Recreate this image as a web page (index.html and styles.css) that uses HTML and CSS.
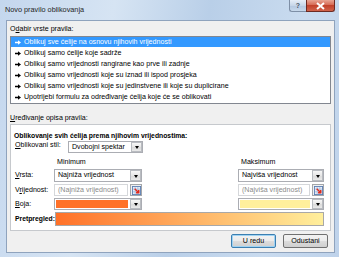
FILE: index.html
```html
<!DOCTYPE html>
<html>
<head>
<meta charset="utf-8">
<link rel="stylesheet" href="styles.css">
</head>
<body>
<div class="window">
  <div class="titlebar">
    <div class="title">Novo pravilo oblikovanja</div>
    <div class="caption">
      <div class="cap-help">?</div>
      <div class="cap-close"><svg width="11" height="8" viewBox="0 0 11 8"><path d="M2 1 L9 7 M9 1 L2 7" stroke="#fff" stroke-width="2"/></svg></div>
    </div>
  </div>
  <div class="client">
    <div class="label"><span>O<u>d</u>abir vrste pravila:</span></div>
    <div class="listbox">
      <div class="item selected"><svg class="arr" width="6" height="5" viewBox="0 0 6 5"><path d="M0 1.8 H3 V0.3 L6 2.5 L3 4.7 V3.2 H0 Z" fill="currentColor"/></svg>Oblikuj sve ćelije na osnovu njihovih vrijednosti</div>
      <div class="item"><svg class="arr" width="6" height="5" viewBox="0 0 6 5"><path d="M0 1.8 H3 V0.3 L6 2.5 L3 4.7 V3.2 H0 Z" fill="currentColor"/></svg>Oblikuj samo ćelije koje sadrže</div>
      <div class="item"><svg class="arr" width="6" height="5" viewBox="0 0 6 5"><path d="M0 1.8 H3 V0.3 L6 2.5 L3 4.7 V3.2 H0 Z" fill="currentColor"/></svg>Oblikuj samo vrijednosti rangirane kao prve ili zadnje</div>
      <div class="item"><svg class="arr" width="6" height="5" viewBox="0 0 6 5"><path d="M0 1.8 H3 V0.3 L6 2.5 L3 4.7 V3.2 H0 Z" fill="currentColor"/></svg>Oblikuj samo vrijednosti koje su iznad ili ispod prosjeka</div>
      <div class="item"><svg class="arr" width="6" height="5" viewBox="0 0 6 5"><path d="M0 1.8 H3 V0.3 L6 2.5 L3 4.7 V3.2 H0 Z" fill="currentColor"/></svg>Oblikuj samo vrijednosti koje su jedinstvene ili koje su duplicirane</div>
      <div class="item"><svg class="arr" width="6" height="5" viewBox="0 0 6 5"><path d="M0 1.8 H3 V0.3 L6 2.5 L3 4.7 V3.2 H0 Z" fill="currentColor"/></svg>Upotrijebi formulu za određivanje ćelija koje će se oblikovati</div>
    </div>
    <div class="label label2"><u>U</u>ređivanje opisa pravila:</div>
    <div class="descbox">
      <div class="bold">Oblikovanje svih ćelija prema njihovim vrijednostima:</div>
      <div class="stylerow">
        <span class="stylelabel"><u>O</u>blikovani stil:</span>
        <div class="combo combo-style"><span class="ctext">Dvobojni spektar</span><span class="ddbtn"><i></i></span></div>
      </div>
      <div class="grid">
        <div></div>
        <div class="colhead">Minimum</div>
        <div></div>
        <div class="colhead">Maksimum</div>

        <div class="rowlabel"><u>V</u>rsta:</div>
        <div class="combo"><span class="ctext">Najniža vrijednost</span><span class="ddbtn"><i></i></span></div>
        <div></div>
        <div class="combo"><span class="ctext">Najviša vrijednost</span><span class="ddbtn"><i></i></span></div>

        <div class="rowlabel">V<u>r</u>ijednost:</div>
        <div class="refrow"><div class="field">(Najniža vrijednost)</div><span class="refbtn"><svg width="10" height="10" viewBox="0 0 10 10"><rect x="0.5" y="0.5" width="9" height="9" fill="#e8eef8" stroke="#5b7fb4"/><path d="M1 3.5 H9 M1 6.5 H9 M3.5 1 V9 M6.5 1 V9" stroke="#9fb4d6" stroke-width="0.8"/><path d="M3 3 L7.5 7.5 M7.5 4.5 V7.5 H4.5" stroke="#e02a1c" stroke-width="1.6" fill="none"/></svg></span></div>
        <div></div>
        <div class="refrow"><div class="field">(Najviša vrijednost)</div><span class="refbtn"><svg width="10" height="10" viewBox="0 0 10 10"><rect x="0.5" y="0.5" width="9" height="9" fill="#e8eef8" stroke="#5b7fb4"/><path d="M1 3.5 H9 M1 6.5 H9 M3.5 1 V9 M6.5 1 V9" stroke="#9fb4d6" stroke-width="0.8"/><path d="M3 3 L7.5 7.5 M7.5 4.5 V7.5 H4.5" stroke="#e02a1c" stroke-width="1.6" fill="none"/></svg></span></div>

        <div class="rowlabel"><u>B</u>oja:</div>
        <div class="combo colorcombo"><span class="swatch swatch-min"></span><span class="ddbtn"><i></i></span></div>
        <div></div>
        <div class="combo colorcombo"><span class="swatch swatch-max"></span><span class="ddbtn"><i></i></span></div>

        <div class="rowlabel bold prev">Pretpregled:</div>
        <div class="preview"></div>
      </div>
    </div>
    <div class="buttons">
      <div class="btn default">U redu</div>
      <div class="btn">Odustani</div>
    </div>
  </div>
</div>
</body>
</html>
```
FILE: styles.css
```css
* { box-sizing: border-box; }
html, body { margin: 0; padding: 0; }
body {
  width: 339px;
  height: 257px;
  overflow: hidden;
  font-family: "Liberation Sans", Arial, sans-serif;
  font-size: 7.1px;
  color: #000;
}
u { text-decoration: underline; text-underline-offset: 1px; }
.window {
  width: 339px;
  height: 257px;
  display: flex;
  flex-direction: column;
  background: linear-gradient(100deg, #c4d7ee 0%, #d6e4f3 30%, #b9cfe8 55%, #c9dbef 80%, #bed2ea 100%);
}
.titlebar {
  height: 20px;
  display: flex;
  justify-content: space-between;
  align-items: flex-start;
  flex: none;
}
.title {
  padding-left: 5px;
  line-height: 20px;
  font-size: 7.3px;
  color: #1e1e1e;
}
.caption {
  display: flex;
  margin-right: 4px;
}
.cap-help {
  width: 17px;
  height: 12px;
  border: 1px solid #7e8fa6;
  border-top: none;
  border-right: none;
  border-radius: 0 0 0 3px;
  background: linear-gradient(#e6eef8, #c7d6e9 50%, #b3c7e0 51%, #c8d9ec);
  color: #4a5566;
  font-size: 7px;
  font-weight: bold;
  text-align: center;
  line-height: 11px;
}
.cap-close {
  width: 29px;
  height: 12px;
  border: 1px solid #6d2a22;
  border-top: none;
  border-radius: 0 0 3px 0;
  background: linear-gradient(#e8a493, #d66a55 45%, #c2412b 50%, #d1634b);
  display: flex;
  align-items: center;
  justify-content: center;
}
.client {
  flex: 1;
  margin: 0 4px 4px 6px;
  background: #f0f0f0;
  border: 1px solid #8fa3bd;
  padding: 3px 3px 0 3px;
  display: flex;
  flex-direction: column;
}
.label {
  height: 10px;
  line-height: 10px;
}
.listbox {
  margin-top: 2px;
  height: 68px;
  background: #fff;
  border: 1px solid #828790;
  display: flex;
  flex-direction: column;
}
.item {
  height: 11px;
  line-height: 11px;
  padding-left: 4px;
  white-space: nowrap;
  display: flex;
  align-items: center;
}
.item.selected {
  background: #3399ff;
  color: #fff;
  height: 10px;
  line-height: 10px;
  margin-bottom: 1px;
}
.arr {
  flex: none;
  margin-right: 3px;
  display: block;
}
.label2 { margin-top: 9px; }
.descbox {
  margin-top: 1px;
  height: 107px;
  background: #fff;
  border: 1px solid #c6c9cd;
  padding: 6px 6px 0 3px;
}
.bold { font-weight: bold; font-size: 6.8px; }
.descbox > .bold { height: 10px; line-height: 10px; }
.stylerow {
  display: flex;
  align-items: flex-start;
  height: 12px;
}
.stylelabel {
  width: 54px;
  padding-left: 1px;
  line-height: 9px;
}
.combo {
  height: 13px;
  background: #fff;
  border: 1px solid #abadb3;
  display: flex;
  align-items: stretch;
}
.combo-style { width: 75px; height: 12px; }
.ctext {
  flex: 1;
  padding-left: 3px;
  line-height: 11px;
  white-space: nowrap;
  overflow: hidden;
}
.combo-style .ctext { line-height: 10px; }
.ddbtn {
  width: 11px;
  flex: none;
  margin-left: 1px;
  border: 1px solid #b9bcc1;
  background: linear-gradient(#f7f7f7, #e6e6e6 50%, #dadada 51%, #e9e9e9);
  display: flex;
  align-items: center;
  justify-content: center;
}
.ddbtn i {
  display: block;
  width: 0;
  height: 0;
  border-left: 2.5px solid transparent;
  border-right: 2.5px solid transparent;
  border-top: 3px solid #000;
  margin-top: 1px;
}
.grid {
  display: grid;
  grid-template-columns: 40px 88px 96px 86px;
  grid-template-rows: 10px 13px 12px 12px 14px;
  row-gap: 2px;
  margin-top: 4px;
}
.colhead {
  line-height: 10px;
  padding-left: 3px;
}
.rowlabel {
  line-height: 12px;
  padding-left: 1px;
}
.refrow {
  display: flex;
  gap: 2px;
}
.field {
  flex: 1;
  height: 12px;
  border: 1px solid #d5d7da;
  background: #fff;
  color: #8a8a8a;
  line-height: 10px;
  padding-left: 3px;
  white-space: nowrap;
  overflow: hidden;
}
.refbtn {
  width: 12px;
  height: 12px;
  border: 1px solid #a3a6aa;
  background: #eef0f3;
  display: flex;
  align-items: center;
  justify-content: center;
}
.refbtn svg { display: block; width: 9px; height: 9px; }
.colorcombo { padding: 1px; height: 12px; }
.swatch { flex: 1; }
.swatch-min { background: #ff7128; }
.swatch-max { background: #ffef9c; }
.colorcombo .ddbtn { margin: -1px -1px -1px 2px; }
.prev { line-height: 14px; white-space: nowrap; }
.preview {
  grid-column: 2 / 5;
  height: 14px;
  margin-left: 1px;
  border: 1px solid #a8a8a8;
  background: linear-gradient(90deg, #ff7128, #ffef9c);
}
.buttons {
  display: flex;
  justify-content: flex-end;
  gap: 7px;
  margin-top: 3px;
  padding-right: 3px;
}
.btn {
  width: 45px;
  height: 14px;
  line-height: 12px;
  text-align: center;
  border: 1px solid #707070;
  border-radius: 2px;
  background: linear-gradient(#f2f2f2, #ebebeb 50%, #dddddd 51%, #cfcfcf);
}
.btn.default {
  border-color: #3c7fb1;
  box-shadow: inset 0 0 0 1px #9fd3f3;
}
```
